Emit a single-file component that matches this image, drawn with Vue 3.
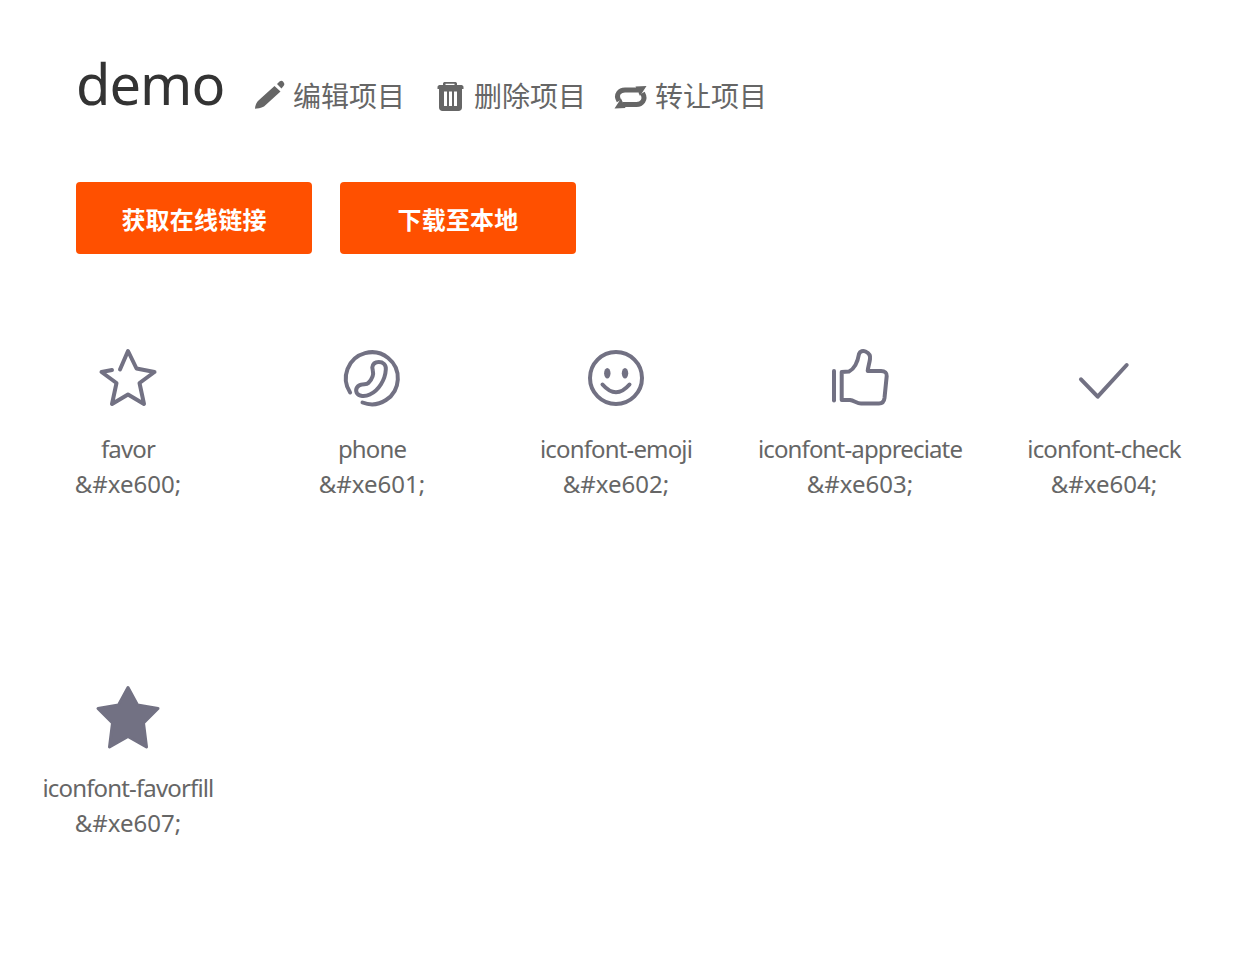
<template>
  <div class="page">
    <div class="header">
      <h1 class="title">demo</h1>
      <a class="action">
        <svg class="action-icon" viewBox="0 0 32 32">
          <path d="M20.500 6 L26.500 11.500 L10 26.500 C7 28 3 28.700 1 28.700 C1 26 2.500 22 5 20 Z" fill="currentColor" />
          <path d="M23 4 L25.500 1.500 C27 0.500 28 0.500 29 1.500 L30 3 C30.500 4 30.500 5 29.500 6 L27.500 8.500 Z" fill="currentColor" />
        </svg>
        <span>编辑项目</span>
      </a>
      <a class="action">
        <svg class="action-icon" viewBox="0 0 32 32">
          <path fill-rule="evenodd" fill="currentColor" d="M8 3.500 C8 2.500 9 2 10 2 L20 2 C21 2 22 2.500 22 3.500 L22 5 L26.500 5 C27.500 5 28.500 6 28.500 7 L28.500 9 L27 9 L27 27.500 C27 29.500 25.500 31 23.500 31 L7.500 31 C5.500 31 4 29.500 4 27.500 L4 9 L2.500 9 L2.500 7 C2.500 6 3.500 5 4.500 5 L8 5 Z M10.500 3.800 L10.500 5 L19.500 5 L19.500 3.800 Z M9 11.500 L9 26 L12 26 L12 11.500 Z M14 11.500 L14 26 L17 26 L17 11.500 Z M19 11.500 L19 26 L22 26 L22 11.500 Z" />
        </svg>
        <span>删除项目</span>
      </a>
      <a class="action">
        <svg class="action-icon" viewBox="0 0 32 32">
          <path fill="none" stroke="currentColor" stroke-width="5" d="M3 21 C-1 14 4 10 9 10 L22 10 M26.500 13 C30.500 20 25.500 24.500 20.500 24.500 L7 24.500" />
          <path fill="currentColor" d="M19.500 6.500 L30.500 6 L24 16 Z M9.500 28 L-1.500 28.500 L5 18.500 Z" />
        </svg>
        <span>转让项目</span>
      </a>
    </div>

    <div class="buttons">
      <button class="btn">获取在线链接</button>
      <button class="btn">下载至本地</button>
    </div>

    <ul class="icon-list">
      <li v-for="item in icons" :key="item.code" class="icon-item">
        <svg class="icon" viewBox="0 0 60 60" v-html="item.svg"></svg>
        <div class="name">{{ item.name }}</div>
        <div class="code">{{ item.code }}</div>
      </li>
    </ul>
  </div>
</template>

<script setup>
const line = 'fill="none" stroke="currentColor" stroke-width="4" stroke-linecap="round" stroke-linejoin="round"'

const icons = [
  {
    name: 'favor',
    code: '&#xe600;',
    svg: `<path ${line} d="M22 21.500 L30 3 L38.500 20.500 L56.500 24 L41.500 35 L46 56 L30 46.500 L14 56 L18.500 35 L3.500 24 L14 22" />`
  },
  {
    name: 'phone',
    code: '&#xe601;',
    svg: `<g transform="translate(0.800 0.500)"><path ${line} d="M19.700 54 A26 26 0 1 0 7.300 44" /><path ${line} d="M29.500 19 C30 15 33 13.500 36 13.500 C40 13.500 43.500 16 43 21 C42.500 31 36 42 27 46 C22 48.500 16 48 14 44.500 C12 40.500 15 36.500 19 36 C22 35.500 24 36 25.500 34.500 C29 31 31 26 30 22 Z" /></g>`
  },
  {
    name: 'iconfont-emoji',
    code: '&#xe602;',
    svg: `<circle ${line} cx="30" cy="30" r="26" /><ellipse cx="21.300" cy="25.300" rx="3.200" ry="5.200" fill="currentColor" /><ellipse cx="39" cy="25.300" rx="3.200" ry="5.200" fill="currentColor" /><path ${line} d="M16.500 36.500 Q30 52 43.500 36.500" />`
  },
  {
    name: 'iconfont-appreciate',
    code: '&#xe603;',
    svg: `<path ${line} d="M4 23 L4 52.500" /><path ${line} d="M11.700 52 L11.700 24 L19 23.500 C24 21 27.500 15 29 6 C30 3 33 2.500 35.500 3.500 C39 5 40.500 8 40 11 C39.500 15 38 19 37.700 23 L51 23 C55 23 57 25 56.700 28 L54.500 50 C54 54 52 55.500 49 55.500 L31 55.500 C27 55.500 24 52.500 20 52 Z" />`
  },
  {
    name: 'iconfont-check',
    code: '&#xe604;',
    svg: `<path ${line} d="M7 31.300 L23.700 48.700 L52.700 17" />`
  },
  {
    name: 'iconfont-favorfill',
    code: '&#xe607;',
    svg: `<path fill="currentColor" stroke="currentColor" stroke-width="3" stroke-linejoin="round" d="M30 0.500 L39.500 18 L60 21.500 L45.500 36 L48.500 60 L30 49.500 L11.500 60 L14.500 36 L0 21.500 L20.500 18 Z" />`
  }
]
</script>

<style scoped>
.page {
  width: 1234px;
  height: 968px;
  padding-top: 48px;
  box-sizing: border-box;
  font-family: "Noto Sans", "Noto Sans CJK SC", sans-serif;
  background: #fff;
}

.header {
  display: flex;
  align-items: center;
  height: 72px;
  padding-left: 76px;
}

.title {
  width: 148px;
  margin: -1px 30px 1px -1px;
  padding-left: 1px;
  box-sizing: content-box;
  font-size: 56px;
  font-weight: 400;
  letter-spacing: -1px;
  line-height: 72px;
  color: #333;
}

.action {
  display: flex;
  align-items: center;
  gap: 7px;
  margin-right: 30px;
  margin-top: 24px;
  font-size: 28px;
  line-height: 40px;
  color: #666;
}

.action-icon {
  width: 32px;
  height: 32px;
  overflow: visible;
}

.buttons {
  display: flex;
  gap: 28px;
  margin-top: 62px;
  padding-left: 76px;
}

.btn {
  width: 236px;
  height: 72px;
  border: none;
  border-radius: 4px;
  background: #ff5000;
  color: #fff;
  font-family: inherit;
  font-size: 24px;
  font-weight: 700;
  letter-spacing: 0.2px;
}

.icon-list {
  display: grid;
  grid-template-columns: repeat(5, 244px);
  grid-template-rows: 339px;
  list-style: none;
  margin: 94px 0 0;
  padding: 0 0 0 6px;
}

.icon-item {
  display: flex;
  flex-direction: column;
  align-items: center;
  font-size: 24px;
  line-height: 35px;
  color: #666;
}

.name {
  letter-spacing: -0.85px;
}

.icon {
  width: 60px;
  height: 60px;
  margin-bottom: 23px;
  color: #727183;
  overflow: visible;
}
</style>
